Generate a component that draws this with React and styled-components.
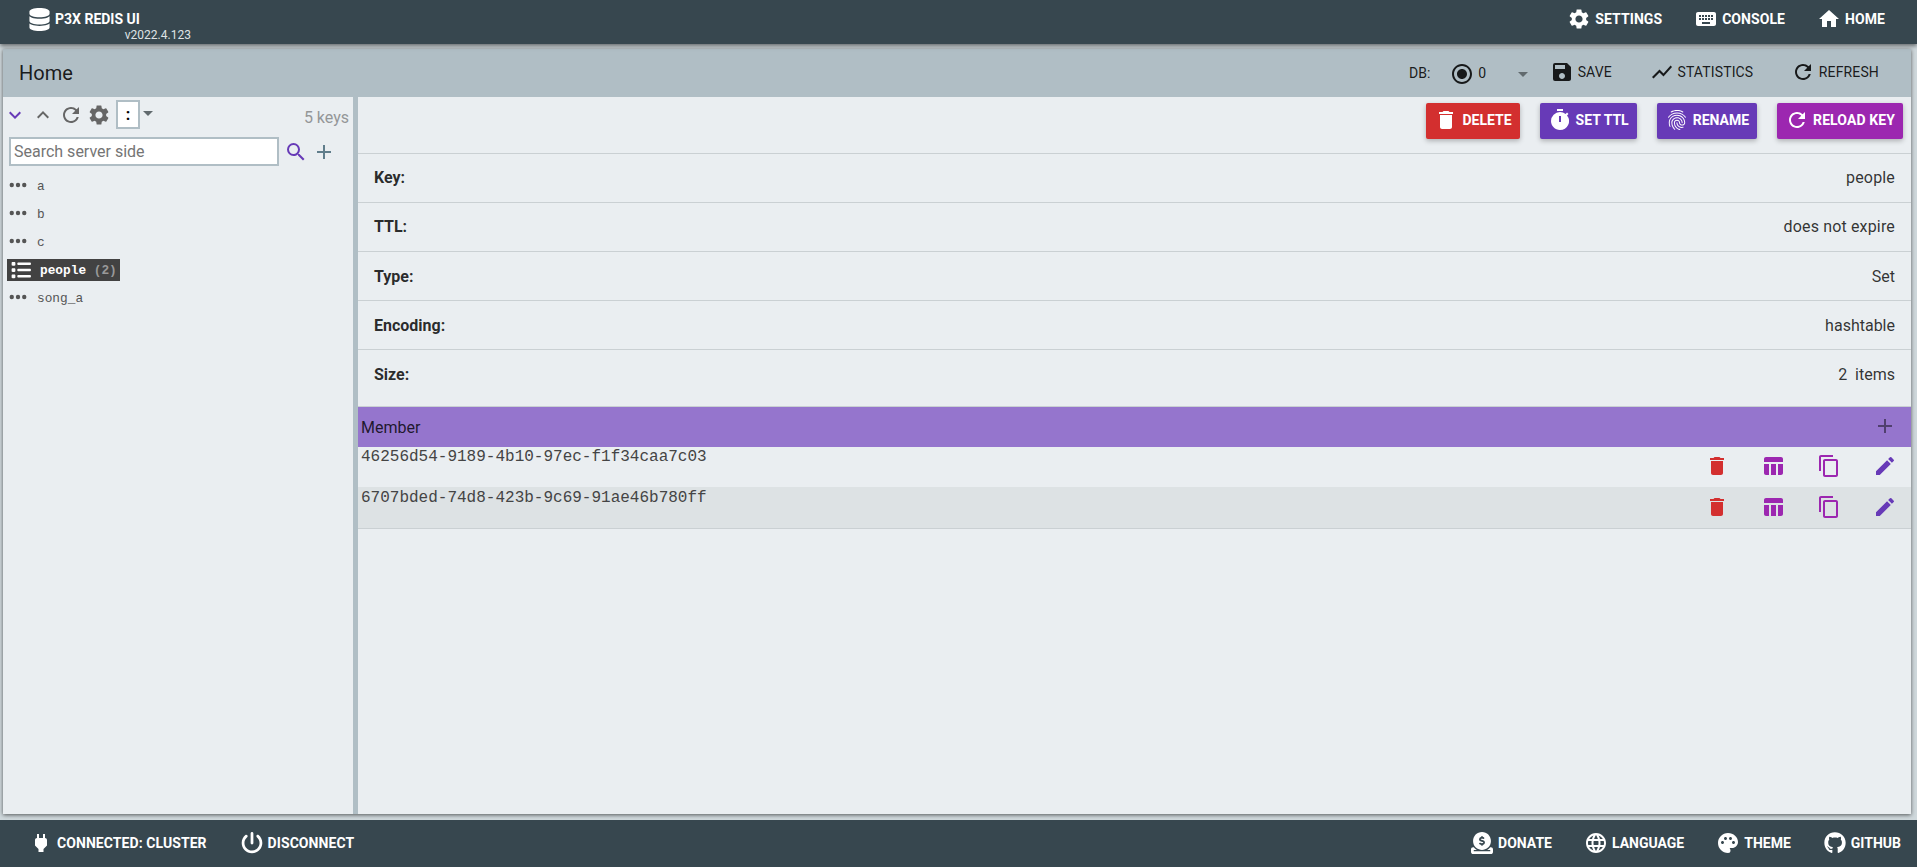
import React from 'react';
import styled, { createGlobalStyle } from 'styled-components';
import {
  MdSettings, MdKeyboard, MdHome, MdRadioButtonChecked, MdSave, MdShowChart, MdRefresh, MdDelete,
  MdTimer, MdFingerprint, MdContentCopy, MdEdit, MdAdd, MdSearch, MdExpandMore, MdExpandLess,
  MdTableChart, MdLanguage, MdPalette, MdPower,
} from 'react-icons/md';
import { FaDatabase, FaPowerOff, FaCircleDollarToSlot, FaGithub, FaList, FaEllipsis } from 'react-icons/fa6';

const GlobalStyle = createGlobalStyle`
  * { box-sizing: border-box; }
  html, body, #root { height: 100%; margin: 0; }
  body { font-family: Roboto, "Liberation Sans", sans-serif; font-size: 16px; color: rgba(0, 0, 0, 0.87); overflow: hidden; }
  svg { display: block; flex: none; }
`;

const Page = styled.div`
  display: flex;
  flex-direction: column;
  height: 100vh;
  background: #cfd8dc;
`;

const Bar = styled.div`
  display: flex;
  justify-content: space-between;
  flex: none;
  background: #37474f;
  color: #fff;
  z-index: 1;
`;

const Header = styled(Bar)`
  height: 44px;
  padding: 7px 32px 0 28px;
  box-shadow: 0 2px 4px rgba(0, 0, 0, 0.5);
`;

const Footer = styled(Bar)`
  height: 47px;
  padding: 11px 16px 0 29px;
`;

const Group = styled.div`
  display: flex;
  align-items: flex-start;
  gap: ${(p) => p.$gap || 0}px;
  letter-spacing: ${(p) => p.$spacing || 0}px;
`;

const BarButton = styled.div`
  display: flex;
  align-items: center;
  height: 24px;
  gap: 4px;
  font-size: 14px;
  font-weight: 700;
  line-height: 24px;
  white-space: nowrap;
  text-transform: uppercase;
`;

const ToolButton = styled(BarButton)`
  gap: 3.5px;
  font-weight: 400;
  letter-spacing: 0.01em;
`;

const Brand = styled.div`
  display: flex;
  flex-direction: column;
`;

const Version = styled.div`
  align-self: flex-end;
  margin: -3px -51px 0 0;
  font-size: 12px;
  line-height: 14px;
  color: #dfe3e5;
`;

const BrandIcon = styled.span`
  padding: 0 1px;
`;

const Panel = styled.main`
  display: flex;
  flex-direction: column;
  flex: 1;
  margin: 5px 6px 6px 3px;
  background: #eaeef1;
  box-shadow: 0 1px 4px rgba(0, 0, 0, 0.6);
`;

const Toolbar = styled.div`
  display: flex;
  align-items: center;
  justify-content: space-between;
  height: 48px;
  padding: 0 32px 0 16px;
  background: #b0bec5;
`;

const Title = styled.div`
  font-size: 20px;
`;

const DbPicker = styled.div`
  display: flex;
  align-items: center;
  font-size: 14px;
  margin-right: 22px;
  svg { margin: 2px 4px 0 20px; }
`;

const Caret = styled.span`
  width: 0;
  height: 0;
  margin: ${(p) => p.$margin};
  border: 5px solid transparent;
  border-top-color: #616a6e;
  border-bottom: 0;
`;

const Columns = styled.div`
  display: flex;
  flex: 1;
`;

const Sidebar = styled.aside`
  width: 350px;
  padding-top: 3px;
`;

const Splitter = styled.div`
  width: 5px;
  background: #b0bec5;
`;

const TreeTools = styled.div`
  display: flex;
  align-items: center;
  height: 29px;
  gap: 4px;
  padding-right: 4px;
  color: #666;
  svg:first-child { color: #673ab7; }
`;

const Divider = styled.span`
  width: 24px;
  height: 29px;
  margin-left: 1px;
  border: 2px solid #b0bec5;
  background: #fff;
  color: #000;
  font-weight: 700;
  text-align: center;
  line-height: 25px;
`;

const KeyCount = styled.span`
  margin: 5px 0 0 auto;
  color: #949698;
`;

const SearchRow = styled.div`
  display: flex;
  align-items: center;
  gap: 4px;
  margin-top: 8px;
  padding-left: 6px;
`;

const SearchInput = styled.input`
  width: 270px;
  height: 29px;
  margin-right: 1px;
  padding: 0 3px;
  border: 2px solid #b0bec5;
  border-radius: 0;
  background: #fff;
  font: 16px Roboto, "Liberation Sans", sans-serif;
  &::placeholder { color: #757575; }
`;

const Tree = styled.div`
  display: flex;
  flex-direction: column;
  align-items: flex-start;
  gap: 6px;
  padding: 9px 0 0 4px;
  font-family: "Liberation Mono", monospace;
  font-size: 12.8px;
  line-height: 20px;
`;

const TreeNode = styled.div`
  display: flex;
  align-items: center;
  height: 22px;
  gap: ${(p) => (p.$selected ? 9 : 9.5)}px;
  padding: 2px 3px 0 ${(p) => (p.$selected ? 4 : 0.5)}px;
  background: ${(p) => (p.$selected ? '#424242' : 'transparent')};
  color: ${(p) => (p.$selected ? '#fff' : '#555')};
  font-weight: ${(p) => (p.$selected ? 700 : 400)};
  white-space: pre;
  svg { margin-top: ${(p) => (p.$selected ? -3 : -4)}px; }
`;

const Count = styled.span`
  color: #999;
`;

const Content = styled.section`
  flex: 1;
`;

const Actions = styled.div`
  display: flex;
  justify-content: flex-end;
  gap: 20px;
  height: 57px;
  padding: 6px 8px 0;
  border-bottom: 1px solid #cad0d3;
`;

const ActionButton = styled.button`
  display: flex;
  align-items: center;
  gap: 4px;
  height: 36px;
  padding: 0 8px 2px;
  border: 0;
  border-radius: 2px;
  background: ${(p) => p.$color};
  color: #fff;
  font: 700 14px Roboto, "Liberation Sans", sans-serif;
  letter-spacing: ${(p) => p.$spacing || 0}px;
  white-space: nowrap;
  text-transform: uppercase;
  box-shadow: 0 2px 5px rgba(0, 0, 0, 0.26);
`;

const InfoRow = styled.div`
  display: flex;
  align-items: center;
  justify-content: space-between;
  height: ${(p) => (p.$last ? 57 : 49)}px;
  padding: 0 16px ${(p) => p.$bottom}px;
  border-bottom: 1px solid #cad0d3;
  color: rgba(0, 0, 0, 0.8);
  letter-spacing: ${(p) => p.$spacing || 0}px;
  white-space: pre;
`;

const Label = styled.span`
  font-weight: 700;
  letter-spacing: 0;
  color: rgba(0, 0, 0, 0.84);
`;

const MemberHeader = styled.div`
  display: flex;
  align-items: center;
  justify-content: space-between;
  height: 40px;
  padding: 0 14px 0 3px;
  background: #9575cd;
  color: rgba(0, 0, 0, 0.8);
  svg { color: #503f6f; margin-top: -2px; }
`;

const MemberRow = styled.div`
  display: flex;
  justify-content: space-between;
  height: 41px;
  padding: 0 14px 0 3px;
  border-bottom: 1px solid ${(p) => (p.$odd ? '#cad0d3' : '#dde2e4')};
  background: ${(p) => (p.$odd ? '#dde2e4' : 'transparent')};
  font-family: "Liberation Mono", monospace;
  color: #444;
  line-height: 20px;
`;

const RowIcons = styled.div`
  display: flex;
  gap: 32px;
  padding-top: 7px;
  color: #9c27b0;
  svg:first-child { color: #d32f2f; }
  svg:last-child { color: #673ab7; }
`;

const keys = ['a', 'b', 'c', 'people', 'song_a'];
const info = [
  { label: 'Key:', value: 'people', bottom: 2, spacing: 0.16 },
  { label: 'TTL:', value: 'does not expire', bottom: 2, spacing: 0.16 },
  { label: 'Type:', value: 'Set', bottom: 0 },
  { label: 'Encoding:', value: 'hashtable', bottom: 0 },
  { label: 'Size:', value: '2  items', bottom: 8 },
];
const members = ['46256d54-9189-4b10-97ec-f1f34caa7c03', '6707bded-74d8-423b-9c69-91ae46b780ff'];

export default function App() {
  return (
    <Page>
      <GlobalStyle />
      <Header>
        <Brand>
          <BarButton><FaDatabase size={23} />P3X Redis UI</BarButton>
          <Version>v2022.4.123</Version>
        </Brand>
        <Group $gap={32} $spacing={0.07}>
          <BarButton><MdSettings size={24} />Settings</BarButton>
          <BarButton><MdKeyboard size={24} />Console</BarButton>
          <BarButton><MdHome size={24} />Home</BarButton>
        </Group>
      </Header>
      <Panel>
        <Toolbar>
          <Title>Home</Title>
          <Group>
            <DbPicker>
              DB:<MdRadioButtonChecked size={24} />0<Caret $margin="3px 0 0 32px" />
            </DbPicker>
            <Group $gap={38}>
              <ToolButton><MdSave size={24} />Save</ToolButton>
              <ToolButton><MdShowChart size={24} />Statistics</ToolButton>
              <ToolButton><MdRefresh size={24} />Refresh</ToolButton>
            </Group>
          </Group>
        </Toolbar>
        <Columns>
          <Sidebar>
            <TreeTools>
              <MdExpandMore size={24} />
              <MdExpandLess size={24} />
              <MdRefresh size={24} />
              <MdSettings size={24} />
              <Divider>:</Divider>
              <Caret $margin="0 0 3px -1px" />
              <KeyCount>5 keys</KeyCount>
            </TreeTools>
            <SearchRow>
              <SearchInput placeholder="Search server side" />
              <MdSearch size={24} color="#673ab7" />
              <MdAdd size={24} color="#607d8b" />
            </SearchRow>
            <Tree>
              {keys.map((k) => (k === 'people' ? (
                <TreeNode key={k} $selected>
                  <FaList size={20} />
                  <span>{k} <Count>(2)</Count></span>
                </TreeNode>
              ) : (
                <TreeNode key={k}><FaEllipsis size={20} />{k}</TreeNode>
              )))}
            </Tree>
          </Sidebar>
          <Splitter />
          <Content>
            <Actions>
              <ActionButton $color="#d32f2f"><MdDelete size={24} />Delete</ActionButton>
              <ActionButton $color="#673ab7"><MdTimer size={24} />Set TTL</ActionButton>
              <ActionButton $color="#673ab7"><MdFingerprint size={24} />Rename</ActionButton>
              <ActionButton $color="#9c27b0" $spacing={0.1}><MdRefresh size={24} />Reload key</ActionButton>
            </Actions>
            {info.map(({ label, value, bottom, spacing }, i) => (
              <InfoRow key={label} $bottom={bottom} $spacing={spacing} $last={i === info.length - 1}>
                <Label>{label}</Label>
                <span>{value}</span>
              </InfoRow>
            ))}
            <MemberHeader>Member<MdAdd size={24} /></MemberHeader>
            {members.map((m, i) => (
              <MemberRow key={m} $odd={i % 2 === 1}>
                {m}
                <RowIcons>
                  <MdDelete size={24} />
                  <MdTableChart size={24} />
                  <MdContentCopy size={24} />
                  <MdEdit size={24} />
                </RowIcons>
              </MemberRow>
            ))}
          </Content>
        </Columns>
      </Panel>
      <Footer>
        <Group $gap={33} $spacing={0.07}>
          <BarButton><MdPower size={24} />Connected: Cluster</BarButton>
          <BarButton><BrandIcon><FaPowerOff size={22} /></BrandIcon>Disconnect</BarButton>
        </Group>
        <Group $gap={32}>
          <BarButton><BrandIcon><FaCircleDollarToSlot size={22} /></BrandIcon>Donate</BarButton>
          <BarButton><MdLanguage size={24} />Language</BarButton>
          <BarButton><MdPalette size={24} />Theme</BarButton>
          <BarButton><BrandIcon><FaGithub size={22} /></BrandIcon>Github</BarButton>
        </Group>
      </Footer>
    </Page>
  );
}
